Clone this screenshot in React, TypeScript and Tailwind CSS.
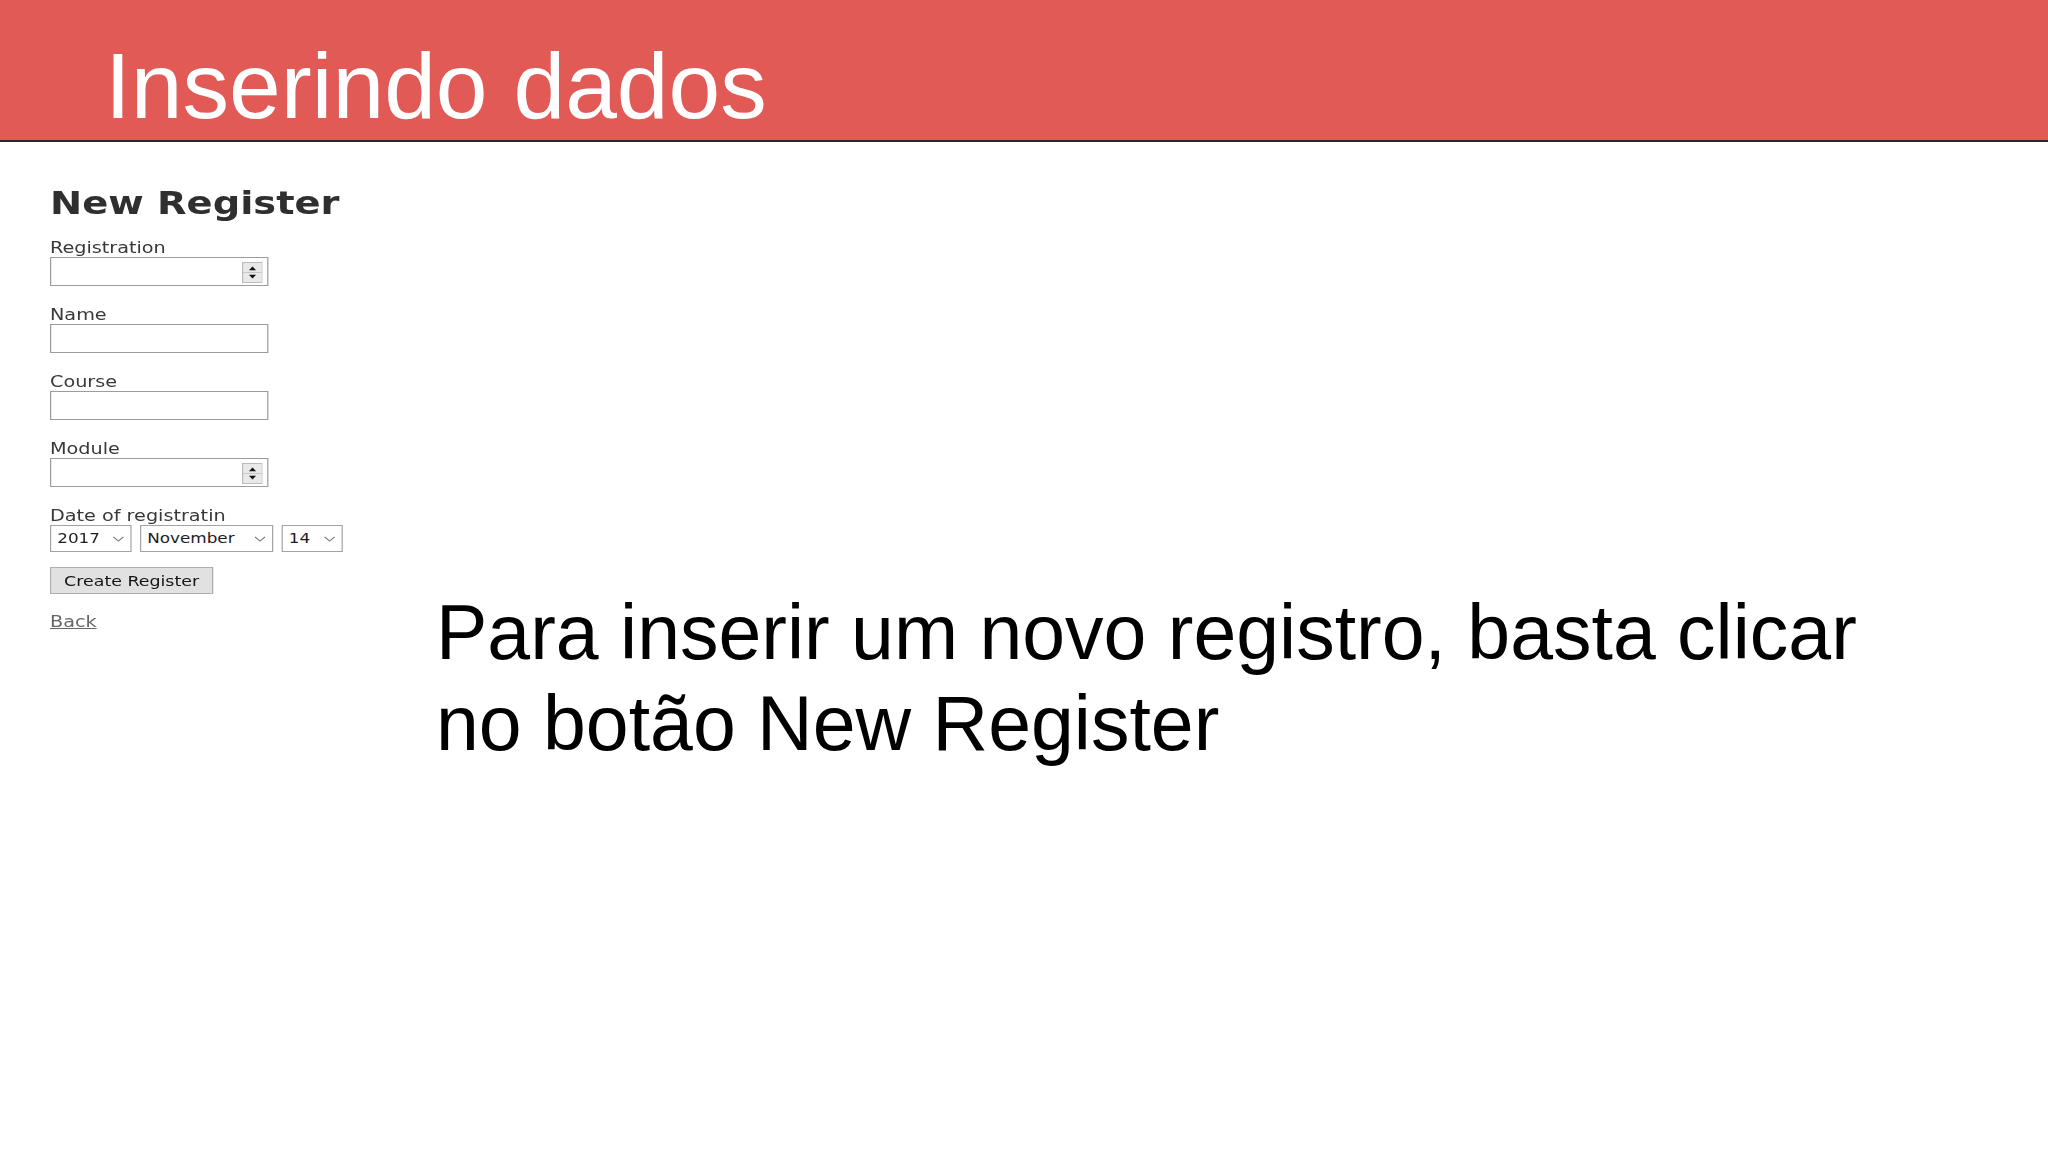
import React from "react"

// number-input spinner, as chromium draws it
function Spinner() {
  return (
    <svg width="17.5" height="21" viewBox="0 0 17.5 21" className="shrink-0">
      <rect x="0.5" y="0.5" width="16.5" height="20" fill="#e9e9e9" stroke="#bcbcbc" />
      <line x1="1" y1="10.5" x2="16.5" y2="10.5" stroke="#c8c8c8" />
      <path d="M8.75 4.5 L11.75 8.2 L5.75 8.2 Z" fill="#111" />
      <path d="M8.75 16.5 L11.75 12.8 L5.75 12.8 Z" fill="#111" />
    </svg>
  )
}

function Chevron() {
  return (
    <svg width="10" height="6" viewBox="0 0 10 6" className="shrink-0">
      <path d="M0.8 0.8 L5 5 L9.2 0.8" fill="none" stroke="#7a7a7a" strokeWidth="1" />
    </svg>
  )
}

function Field({ label, spinner }: { label: string; spinner?: boolean }) {
  return (
    <div className="flex flex-col">
      <label className="h-[19px] text-[16px] leading-[19px] text-[#383838]">{label}</label>
      <div className="flex h-[29px] w-[182px] items-start border border-[#9c9c9c] bg-white pr-[4px] pt-[4px]">
        <input className="h-[20px] min-w-0 flex-1 bg-transparent outline-none" />
        {spinner && <Spinner />}
      </div>
    </div>
  )
}

export default function App() {
  const selects = [
    { value: "2017", width: "w-[68px]" },
    { value: "November", width: "w-[111px]" },
    { value: "14", width: "w-[51px]" },
  ]

  return (
    <div className="min-h-[1152px] w-[2048px] bg-white">
      {/* slide title */}
      <div className="h-[142px] border-b-2 border-[#2b2530] bg-[#e15a55] pl-[105px] pt-[40px]">
        <h1 className="text-[93px] leading-[93px] text-white [font-family:'Liberation_Sans',Arial,sans-serif]">
          Inserindo dados
        </h1>
      </div>

      <div className="flex">
        {/* screenshot of the rails form, stretched like the slide */}
        <div className="w-[436px] shrink-0 pl-[50px] pt-[45px]">
          <div className="origin-top-left scale-x-120 [font-family:'DejaVu_Sans',Verdana,sans-serif]">
            <h2 className="text-[32px] font-bold leading-[32px] text-[#2f2f2f]">New Register</h2>

            <div className="mt-[19px] flex flex-col gap-[19px]">
              <Field label="Registration" spinner />
              <Field label="Name" />
              <Field label="Course" />
              <Field label="Module" spinner />

              <div className="flex flex-col">
                <label className="h-[19px] text-[16px] leading-[19px] text-[#383838]">
                  Date of registratin
                </label>
                <div className="flex gap-[7px]">
                  {selects.map((s) => (
                    <div
                      key={s.value}
                      className={`${s.width} flex h-[27px] items-center justify-between border border-[#a3a3a3] bg-white pl-[5px] pr-[5px] text-[14px] text-[#1e1e1e]`}
                    >
                      <span>{s.value}</span>
                      <Chevron />
                    </div>
                  ))}
                </div>
              </div>
            </div>

            <button className="mt-[15px] flex h-[27px] w-[136px] items-center justify-center border border-[#adadad] bg-[#e1e1e1] pt-[2px] text-[14.5px] text-[#151515]">
              Create Register
            </button>

            <a href="#" className="mt-[18px] block h-[19px] text-[16px] leading-[19px] text-[#666] underline">
              Back
            </a>
          </div>
        </div>

        {/* slide body text */}
        <div className="pt-[445px]">
          <p className="w-[1480px] text-[77px] leading-[91px] text-black [font-family:'Liberation_Sans',Arial,sans-serif]">
            Para inserir um novo registro, basta clicar no botão New Register
          </p>
        </div>
      </div>
    </div>
  )
}
